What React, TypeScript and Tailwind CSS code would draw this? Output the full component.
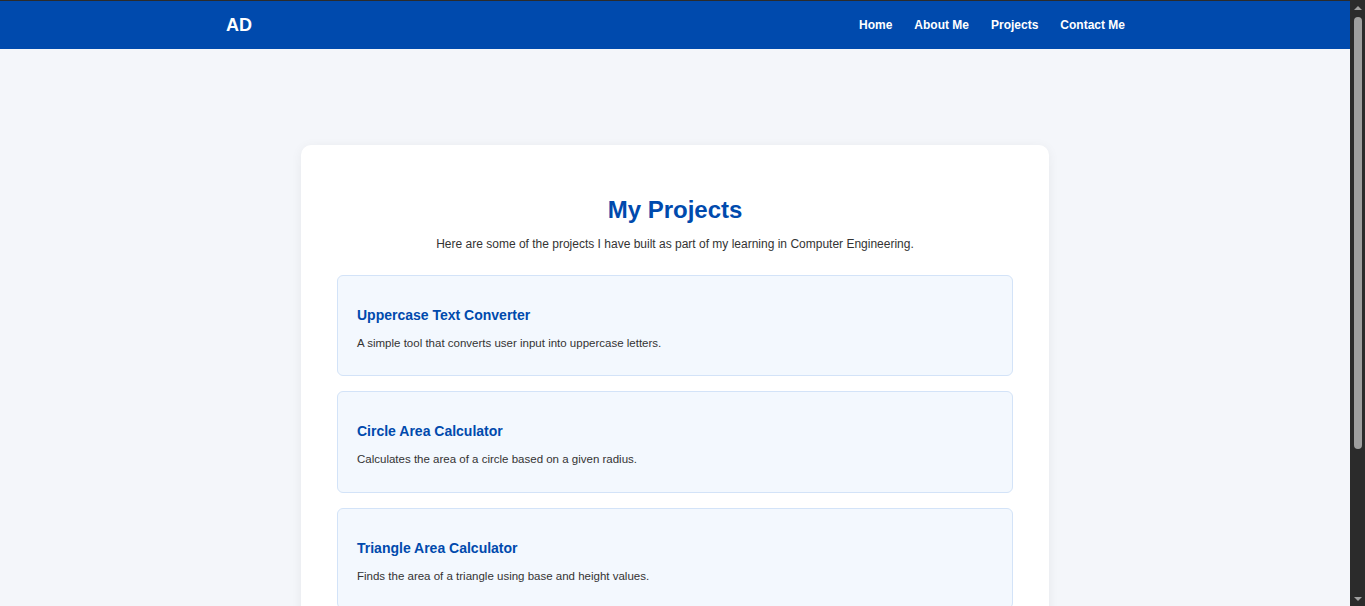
const links = ["Home", "About Me", "Projects", "Contact Me"];

const projects = [
  {
    title: "Uppercase Text Converter",
    desc: "A simple tool that converts user input into uppercase letters.",
  },
  {
    title: "Circle Area Calculator",
    desc: "Calculates the area of a circle based on a given radius.",
  },
  {
    title: "Triangle Area Calculator",
    desc: "Finds the area of a triangle using base and height values.",
  },
  {
    title: "Simple Calculator",
    desc: "Performs basic arithmetic operations like addition and subtraction.",
  },
];

function Navbar() {
  return (
    <nav className="h-[49px] border-t border-[#2b2b2b] bg-[#004aad] text-white">
      <div className="mx-auto flex h-full max-w-[900px] items-center justify-between">
        <span className="pl-px text-[18px] font-bold">AD</span>
        <ul className="flex gap-[22px] text-[12px] font-bold">
          {links.map((link) => (
            <li key={link}>
              <a href="#">{link}</a>
            </li>
          ))}
        </ul>
      </div>
    </nav>
  );
}

function Scrollbar() {
  return (
    <div className="fixed right-0 top-0 flex h-screen w-[15px] flex-col items-center bg-[#2b2b2b] pt-[1px]">
      <span className="mt-[5px] h-0 w-0 border-x-[4px] border-b-[4px] border-x-transparent border-b-[#a0a0a0]" />
      <span className="mt-[7px] h-[432px] w-[8px] rounded-full bg-[#9f9f9f]" />
      <span className="mt-auto mb-[5px] h-0 w-0 border-x-[4px] border-t-[4px] border-x-transparent border-t-[#a0a0a0]" />
    </div>
  );
}

function ProjectCard({ title, desc }: { title: string; desc: string }) {
  return (
    <div className="rounded-md border border-[#d3e3f8] bg-[#f3f8fe] px-[19px] pb-[23px] pt-[29px]">
      <h3 className="mb-[9px] text-[14px] font-bold text-[#004aad]">{title}</h3>
      <p className="text-[11.5px] text-[#333333]">{desc}</p>
    </div>
  );
}

export default function App() {
  return (
    <div className="min-h-screen w-[1350px] bg-[#f4f6fa] pb-10 font-['Liberation_Sans',Arial,sans-serif]">
      <Navbar />
      <main className="mx-auto mt-[96px] w-[748px] rounded-[10px] bg-white px-9 pb-9 pt-[47px] shadow-[0_2px_12px_rgba(0,0,0,0.06)]">
        <h2 className="text-center text-[24px] font-bold text-[#004aad]">My Projects</h2>
        <p className="mt-[7px] text-center text-[12px] text-[#333333]">
          Here are some of the projects I have built as part of my learning in Computer Engineering.
        </p>
        <div className="mt-[22px] flex flex-col gap-[15px]">
          {projects.map((p) => (
            <ProjectCard key={p.title} title={p.title} desc={p.desc} />
          ))}
        </div>
      </main>
      <Scrollbar />
    </div>
  );
}
